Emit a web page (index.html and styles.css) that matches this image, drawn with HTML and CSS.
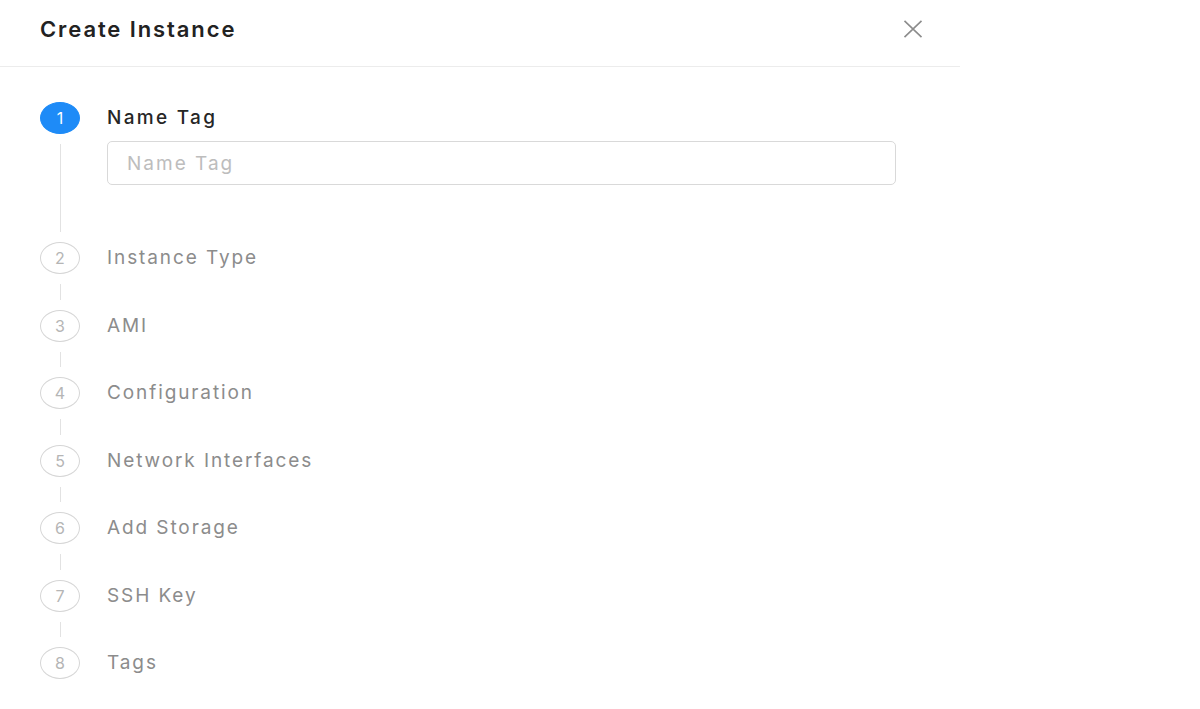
FILE: index.html
```html
<!DOCTYPE html>
<html lang="en">
<head>
<meta charset="utf-8">
<title>Create Instance</title>
<link rel="stylesheet" href="styles.css">
</head>
<body>
<div class="panel">
  <div class="header">
    <div class="title">Create Instance</div>
    <button class="close" aria-label="Close">
      <svg width="20" height="18" viewBox="0 0 20 18"><path d="M1.5 0.8 L18.5 17.2 M18.5 0.8 L1.5 17.2" stroke="#8c8c8c" stroke-width="1.6" fill="none"/></svg>
    </button>
  </div>
  <div class="steps">
    <div class="step active first">
      <div class="rail"><div class="dot">1</div><div class="line"></div></div>
      <div class="content">
        <div class="label">Name Tag</div>
        <div class="input"><span class="placeholder">Name Tag</span></div>
      </div>
    </div>
    <div class="step">
      <div class="rail"><div class="dot">2</div><div class="line"></div></div>
      <div class="content"><div class="label">Instance Type</div></div>
    </div>
    <div class="step">
      <div class="rail"><div class="dot">3</div><div class="line"></div></div>
      <div class="content"><div class="label">AMI</div></div>
    </div>
    <div class="step">
      <div class="rail"><div class="dot">4</div><div class="line"></div></div>
      <div class="content"><div class="label">Configuration</div></div>
    </div>
    <div class="step">
      <div class="rail"><div class="dot">5</div><div class="line"></div></div>
      <div class="content"><div class="label">Network Interfaces</div></div>
    </div>
    <div class="step">
      <div class="rail"><div class="dot">6</div><div class="line"></div></div>
      <div class="content"><div class="label">Add Storage</div></div>
    </div>
    <div class="step">
      <div class="rail"><div class="dot">7</div><div class="line"></div></div>
      <div class="content"><div class="label">SSH Key</div></div>
    </div>
    <div class="step last">
      <div class="rail"><div class="dot">8</div></div>
      <div class="content"><div class="label">Tags</div></div>
    </div>
  </div>
</div>
</body>
</html>
```
FILE: styles.css
```css
html, body {
  margin: 0;
  padding: 0;
  background: #fff;
}
body {
  font-family: Inter, "Liberation Sans", Arial, sans-serif;
  color: #262626;
}
.panel {
  width: 960px;
}
.header {
  height: 67px;
  border-bottom: 1px solid #ececec;
  display: flex;
  align-items: center;
  justify-content: space-between;
  padding: 0 37px 8px 40px;
  box-sizing: border-box;
}
.title {
  font-size: 22px;
  font-weight: 600;
  letter-spacing: 1.9px;
  color: #222;
}
.close {
  border: 0;
  background: none;
  padding: 0;
  width: 20px;
  height: 18px;
  display: flex;
  cursor: pointer;
}
.steps {
  padding: 35px 0 0 40px;
}
.step {
  display: flex;
  gap: 27px;
  padding-bottom: 35.5px;
}
.step.first {
  padding-bottom: 57px;
}
.step.last {
  padding-bottom: 0;
}
.rail {
  width: 40px;
  flex: none;
  display: flex;
  flex-direction: column;
  align-items: center;
  position: relative;
}
.dot {
  width: 38px;
  height: 30px;
  border: 1px solid #d6d6d6;
  border-radius: 50%;
  display: flex;
  align-items: center;
  justify-content: center;
  font-size: 16px;
  color: #b5b5b5;
  flex: none;
}
.active .dot {
  background: #1e8bf7;
  border-color: #1e8bf7;
  color: #fff;
}
.line {
  position: absolute;
  top: 42px;
  bottom: -25.5px;
  left: 19.5px;
  width: 1px;
  background: #e2e2e2;
}
.first .line {
  bottom: -47px;
}
.content {
  flex: 1;
  max-width: 789px;
}
.label {
  height: 32px;
  line-height: 32px;
  font-size: 19px;
  letter-spacing: 1.9px;
  color: #8c8c8c;
}
.active .label {
  color: #262626;
  font-weight: 500;
  letter-spacing: 2.3px;
}
.input {
  margin-top: 7px;
  height: 44px;
  border: 1px solid #d9d9d9;
  border-radius: 5px;
  box-sizing: border-box;
  display: flex;
  align-items: center;
  padding-left: 19px;
}
.placeholder {
  font-size: 19px;
  letter-spacing: 2px;
  color: #bdbdbd;
}
```
